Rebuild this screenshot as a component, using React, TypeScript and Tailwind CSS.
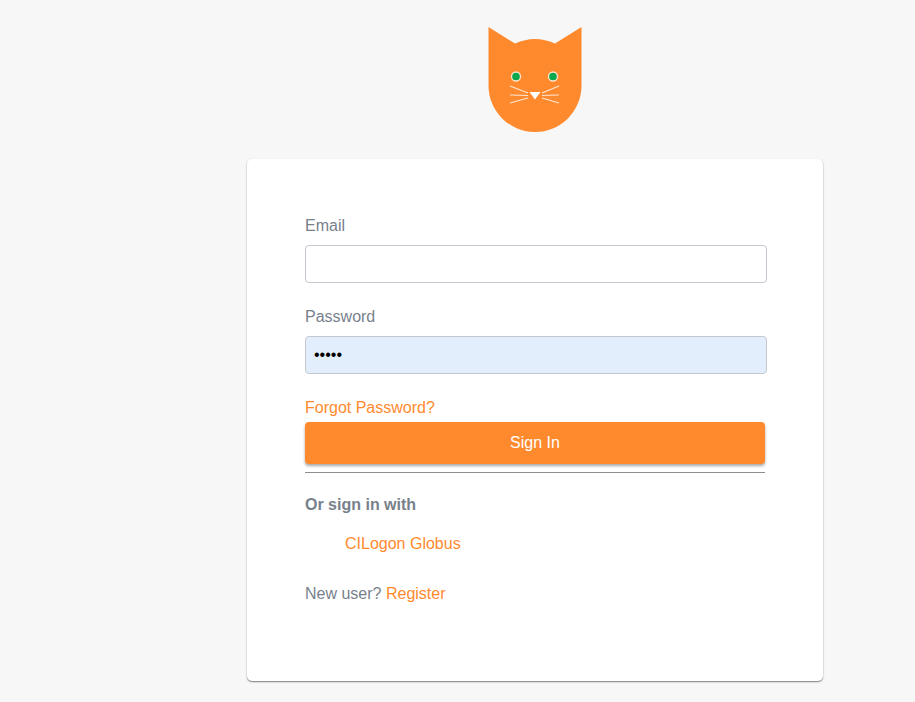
export default function App() {
  return (
    <div className="min-h-[702px] overflow-hidden bg-[#f7f7f7] text-base leading-6 text-[#78818b] [font-family:'Liberation_Sans',Arial,sans-serif]">
      <div className="ml-[247px] flex h-[159px] w-[576px] justify-center pt-[27px]">
        <svg width="94" height="106" viewBox="488 27 94 106" className="shrink-0">
          <path
            d="M488.500 27 L515 43.500 Q525 39 535 39 Q545 39 555 43.500 L581.500 27 L581.500 85.500 A46.500 46.500 0 0 1 488.500 85.500 Z"
            fill="#ff8a2e"
          />
          <circle cx="516" cy="76.500" r="4.500" fill="#0aa84f" stroke="#ffe3cc" strokeWidth="1.300" />
          <circle cx="553" cy="76.500" r="4.500" fill="#0aa84f" stroke="#ffe3cc" strokeWidth="1.300" />
          <path d="M529.500 92 L540.500 92 L535 99.500 Z" fill="#ffffff" />
          <g stroke="#ffe6d3" strokeWidth="1.100" fill="none">
            <path d="M510 86 L528 93" />
            <path d="M510 95 L528 95.500" />
            <path d="M510 103 L528 98" />
            <path d="M559 86 L542 93" />
            <path d="M559 95 L542 95.500" />
            <path d="M559 103 L542 98" />
          </g>
        </svg>
      </div>
      <div className="ml-[247px] h-[522px] w-[576px] rounded-[5px] bg-white pl-[58px] pt-[55px] shadow-[0_1px_1.5px_rgba(0,0,0,0.5)]">
        <label className="mb-[7px] block">Email</label>
        <input
          type="text"
          className="mb-[22px] block h-[38px] w-[462px] rounded-[4px] border border-[#c3c8d0] bg-white px-3 outline-none"
        />
        <label className="mb-[7px] block">Password</label>
        <input
          type="password"
          defaultValue="12345"
          className="mb-[22px] block h-[38px] w-[462px] rounded-[4px] border border-[#c3c8d0] bg-[#e2eefb] px-2 text-black outline-none"
        />
        <a className="mb-[2px] block text-[#ff8a2e]">Forgot Password?</a>
        <button className="block h-[42px] w-[460px] rounded-[4px] bg-[#ff8a2e] text-center text-white shadow-[0_2px_3px_rgba(0,0,0,0.35)]">
          Sign In
        </button>
        <hr className="mt-2 w-[460px] border-0 border-t border-[#8e8e8e]" />
        <p className="mt-[20px] font-bold">Or sign in with</p>
        <p className="mt-[15px] pl-10 text-[#ff8a2e]">CILogon Globus</p>
        <p className="mt-[26px]">
          New user? <a className="text-[#ff8a2e]">Register</a>
        </p>
      </div>
    </div>
  );
}
